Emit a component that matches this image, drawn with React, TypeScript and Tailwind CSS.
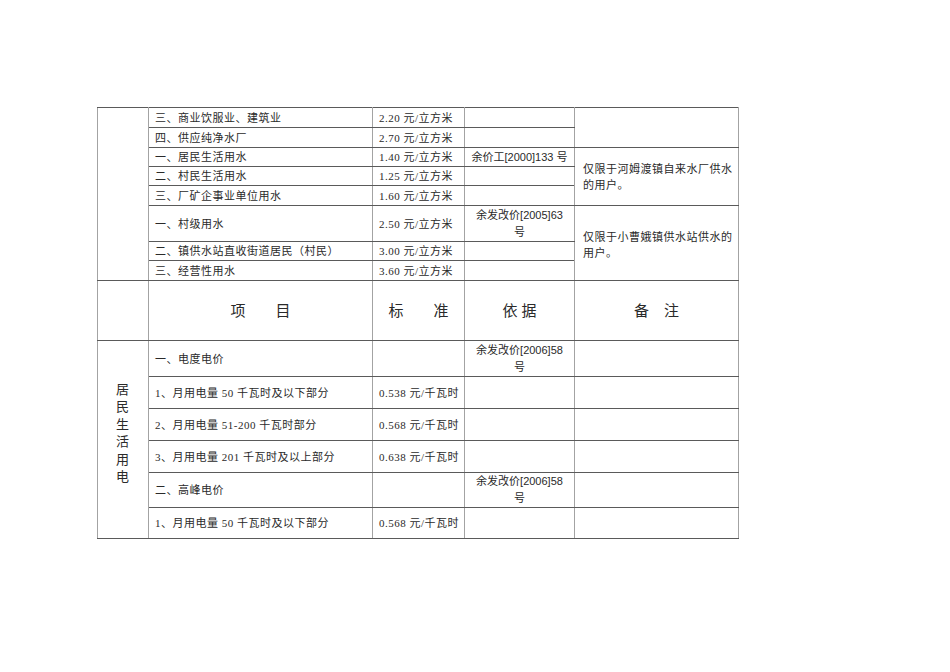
import React from "react";

const SERIF = "font-['Liberation_Serif','Noto_Sans_CJK_SC',serif]";
const SANS = "font-['Liberation_Sans','Noto_Sans_CJK_SC',sans-serif]";

// cell borders: dark horizontals, lighter verticals
const cell = "border-y border-y-[#5a5a5a] border-x border-x-[#a3a3a3] p-0 align-middle";

type WaterRow = { h: string; item: string; price: string; basis?: React.ReactNode };

const water: WaterRow[] = [
  { h: "h-[20px]", item: "三、商业饮服业、建筑业", price: "2.20 元/立方米" },
  { h: "h-[20px]", item: "四、供应纯净水厂", price: "2.70 元/立方米" },
  { h: "h-[19px]", item: "一、居民生活用水", price: "1.40 元/立方米", basis: "余价工[2000]133 号" },
  { h: "h-[19px]", item: "二、村民生活用水", price: "1.25 元/立方米" },
  { h: "h-[20px]", item: "三、厂矿企事业单位用水", price: "1.60 元/立方米" },
  {
    h: "h-[36px]",
    item: "一、村级用水",
    price: "2.50 元/立方米",
    basis: (
      <>
        余发改价[2005]63
        <br />号
      </>
    ),
  },
  { h: "h-[19px]", item: "二、镇供水站直收街道居民（村民）", price: "3.00 元/立方米" },
  { h: "h-[20px]", item: "三、经营性用水", price: "3.60 元/立方米" },
];

type PowerRow = { h: string; item: string; price: string; basis?: boolean };

const power: PowerRow[] = [
  { h: "h-[36px]", item: "一、电度电价", price: "", basis: true },
  { h: "h-[32px]", item: "1、月用电量 50 千瓦时及以下部分", price: "0.538 元/千瓦时" },
  { h: "h-[32px]", item: "2、月用电量 51-200 千瓦时部分", price: "0.568 元/千瓦时" },
  { h: "h-[32px]", item: "3、月用电量 201 千瓦时及以上部分", price: "0.638 元/千瓦时" },
  { h: "h-[35px]", item: "二、高峰电价", price: "", basis: true },
  { h: "h-[31px]", item: "1、月用电量 50 千瓦时及以下部分", price: "0.568 元/千瓦时" },
];

function Note({ text }: { text: string }) {
  return <div className="pl-[8px] pr-[4px] leading-[16px]">{text}</div>;
}

export default function App() {
  return (
    <div className="min-h-[672px] w-[950px] bg-white pl-[97px] pt-[107px]">
      <table
        className={`w-[642px] table-fixed border-collapse border border-l-[#555] border-r-[#777] border-y-[#555] text-[11px] leading-[14px] tracking-[0.5px] text-[#2a2a2a] ${SERIF}`}
      >
        <colgroup>
          <col className="w-[51px]" />
          <col className="w-[224px]" />
          <col className="w-[92px]" />
          <col className="w-[110px]" />
          <col className="w-[164px]" />
        </colgroup>
        <tbody>
          {water.map((r, i) => (
            <tr key={i} className={r.h}>
              {i === 0 && <td rowSpan={8} className={cell} />}
              <td className={cell}>
                <div className="whitespace-nowrap pl-[6px]">{r.item}</div>
              </td>
              <td className={cell}>
                <div className="whitespace-nowrap pl-[6px]">{r.price}</div>
              </td>
              <td className={cell}>
                {r.basis && (
                  <div className={`whitespace-nowrap text-center leading-[17px] tracking-normal ${SANS}`}>
                    {r.basis}
                  </div>
                )}
              </td>
              {i === 0 && <td rowSpan={2} className={cell} />}
              {i === 2 && (
                <td rowSpan={3} className={cell}>
                  <Note text="仅限于河姆渡镇自来水厂供水的用户。" />
                </td>
              )}
              {i === 5 && (
                <td rowSpan={3} className={cell}>
                  <div className="pt-[4px]">
                    <Note text="仅限于小曹娥镇供水站供水的用户。" />
                  </div>
                </td>
              )}
            </tr>
          ))}

          {/* header row */}
          <tr className="h-[60px] text-[15px] leading-[20px] tracking-normal">
            <td className={cell} />
            <td className={`${cell} text-center`}>项　　目</td>
            <td className={`${cell} text-center`}>标　　准</td>
            <td className={`${cell} text-center ${SANS}`}>依 据</td>
            <td className={`${cell} text-center`}>备　注</td>
          </tr>

          {power.map((r, i) => (
            <tr key={i} className={r.h}>
              {i === 0 && (
                <td rowSpan={6} className={cell}>
                  <div className="mx-auto w-[14px] break-all pb-[13px] text-[13px] leading-[17.5px] tracking-normal">
                    居民生活用电
                  </div>
                </td>
              )}
              <td className={cell}>
                <div className="whitespace-nowrap pl-[6px]">{r.item}</div>
              </td>
              <td className={cell}>
                <div className="whitespace-nowrap pl-[6px]">{r.price}</div>
              </td>
              <td className={cell}>
                {r.basis && (
                  <div className={`text-center leading-[17px] tracking-normal ${SANS}`}>
                    余发改价[2006]58
                    <br />号
                  </div>
                )}
              </td>
              <td className={cell} />
            </tr>
          ))}
        </tbody>
      </table>
    </div>
  );
}
